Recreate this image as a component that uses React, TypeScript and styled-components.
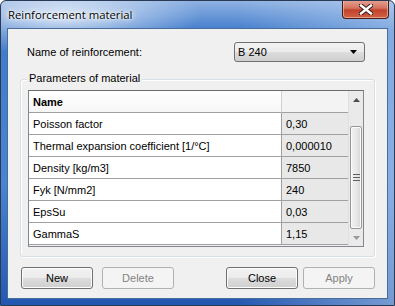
import styled, { createGlobalStyle } from "styled-components";

const rows = [
  { name: "Poisson factor", value: "0,30" },
  { name: "Thermal expansion coefficient [1/°C]", value: "0,000010" },
  { name: "Density [kg/m3]", value: "7850" },
  { name: "Fyk [N/mm2]", value: "240" },
  { name: "EpsSu", value: "0,03" },
  { name: "GammaS", value: "1,15" },
];

const Global = createGlobalStyle`
  html, body { margin: 0; padding: 0; background: #fff; }
  body { font-family: "Liberation Sans", Arial, sans-serif; font-size: 11px; color: #000; }
`;

const App = () => (
  <>
    <Global />
    <Window>
      <TitleBar>
        <Title>Reinforcement material</Title>
        <CloseBtn>
          <svg width="14" height="11" viewBox="0 0 14 11">
            <path
              d="M2 1.5 L12 9.5 M12 1.5 L2 9.5"
              stroke="#3a1a1a"
              strokeWidth="4.4"
              strokeLinecap="square"
            />
            <path
              d="M2 1.5 L12 9.5 M12 1.5 L2 9.5"
              stroke="#fff"
              strokeWidth="2.4"
              strokeLinecap="square"
            />
          </svg>
        </CloseBtn>
      </TitleBar>
      <Client>
        <NameRow>
          <Label>Name of reinforcement:</Label>
          <Combo>
            <span>B 240</span>
            <svg width="7" height="4" viewBox="0 0 7 4">
              <path d="M0 0 H7 L3.5 4 Z" fill="#000" />
            </svg>
          </Combo>
        </NameRow>
        <Group>
          <Legend>Parameters of material</Legend>
          <Grid>
            <Table>
              <HeaderRow>
                <HeadCell>Name</HeadCell>
                <HeadCell $value />
              </HeaderRow>
              {rows.map((r) => (
                <Row key={r.name}>
                  <Cell>{r.name}</Cell>
                  <Cell $value>{r.value}</Cell>
                </Row>
              ))}
            </Table>
            <ScrollBar>
              <Arrow>
                <svg width="7" height="4" viewBox="0 0 7 4">
                  <path d="M0 4 H7 L3.5 0 Z" fill="#4d4d4d" />
                </svg>
              </Arrow>
              <Track>
                <Thumb>
                  <Grip />
                </Thumb>
              </Track>
              <Arrow>
                <svg width="7" height="4" viewBox="0 0 7 4">
                  <path d="M0 0 H7 L3.5 4 Z" fill="#9a9a9a" />
                </svg>
              </Arrow>
            </ScrollBar>
          </Grid>
        </Group>
        <Buttons>
          <Pair $gap={9}>
            <Button>New</Button>
            <Button disabled>Delete</Button>
          </Pair>
          <Pair $gap={5}>
            <Button>Close</Button>
            <Button disabled>Apply</Button>
          </Pair>
        </Buttons>
      </Client>
    </Window>
  </>
);

const Window = styled.div`
  width: 395px;
  height: 306px;
  box-sizing: border-box;
  border: 1px solid #2a3a55;
  border-radius: 6px 6px 0 0;
  background:
    radial-gradient(ellipse 140px 40px at 60px 14px, rgba(235, 242, 250, 0.85), rgba(235, 242, 250, 0) 100%),
    linear-gradient(90deg, rgba(255, 255, 255, 0) 0%, rgba(255, 255, 255, 0) 60%,
      rgba(200, 220, 245, 0.5) 100%),
    linear-gradient(180deg, #8fb2e2 0%, #3f7bcc 10%, #4a84d0 60%, #2358b0 100%);
  display: flex;
  flex-direction: column;
  overflow: hidden;
`;

const TitleBar = styled.div`
  height: 27px;
  display: flex;
  align-items: flex-start;
  justify-content: space-between;
  padding-left: 7px;
  padding-right: 5px;
`;

const Title = styled.div`
  font-family: "Open Sans", "Liberation Sans", sans-serif;
  font-size: 11.3px;
  color: #000;
  margin-top: 6px;
  text-shadow: 0 0 8px #fff, 0 0 4px #fff, 0 0 2px #fff;
`;

const CloseBtn = styled.div`
  width: 47px;
  height: 19px;
  margin-top: -1px;
  box-sizing: border-box;
  border: 1px solid #4a1a16;
  border-top: none;
  border-radius: 0 0 4px 4px;
  background: linear-gradient(180deg, #e3a595 0%, #d5735f 45%, #c2422b 55%, #cf6244 100%);
  box-shadow: inset 0 0 0 1px rgba(255, 210, 190, 0.55);
  display: flex;
  align-items: center;
  justify-content: center;
`;

const Client = styled.div`
  flex: 1;
  margin: 0 6px 6px 6px;
  background: #f0f0f0;
  border: 1px solid #4a6c98;
  padding: 13px 12px 0 12px;
  display: flex;
  flex-direction: column;
`;

const NameRow = styled.div`
  display: flex;
  align-items: center;
  justify-content: space-between;
  padding: 0 10px 0 7px;
  height: 20px;
`;

const Label = styled.div`
  font-size: 11px;
`;

const Combo = styled.div`
  width: 131px;
  height: 20px;
  box-sizing: border-box;
  border: 1px solid #707070;
  border-radius: 3px;
  background: linear-gradient(180deg, #f2f2f2 0%, #ebebeb 49%, #dddddd 50%, #cfcfcf 100%);
  display: flex;
  align-items: center;
  justify-content: space-between;
  padding: 0 7px 0 3px;
`;

const Group = styled.div`
  position: relative;
  margin-top: 17px;
  height: 178px;
  box-sizing: border-box;
  border: 1px solid #d5dfe5;
  border-radius: 3px;
  box-shadow: inset 1px 1px 0 #fff, 1px 1px 0 #fff;
  padding: 10px 10px 0 7px;
`;

const Legend = styled.div`
  position: absolute;
  top: -8px;
  left: 6px;
  padding: 0 2px;
  background: #f0f0f0;
  font-size: 11px;
`;

const Grid = styled.div`
  display: flex;
  height: 157px;
  box-sizing: border-box;
  border: 1px solid #828790;
  border-top-color: #6d6d6d;
  background: #f0f0f0;
`;

const Table = styled.div`
  display: grid;
  grid-template-columns: 253px 66px;
  grid-auto-rows: 22px;
  align-content: start;
`;

const HeaderRow = styled.div`
  display: contents;
`;

const HeadCell = styled.div<{ $value?: boolean }>`
  background: linear-gradient(180deg, #ffffff 0%, #f6f6f6 100%);
  border-bottom: 1px solid #a0a0a0;
  border-right: 1px solid #d0d0d0;
  font-weight: bold;
  display: flex;
  align-items: center;
  padding-left: 4px;
  ${(p) => p.$value && "background: #f3f3f3; border-right: none;"}
`;

const Row = styled.div`
  display: contents;
`;

const Cell = styled.div<{ $value?: boolean }>`
  background: ${(p) => (p.$value ? "#e8e8e8" : "#fff")};
  border-bottom: 1px solid #a0a0a0;
  border-right: ${(p) => (p.$value ? "none" : "1px solid #a0a0a0")};
  display: flex;
  align-items: center;
  padding-left: 4px;
  white-space: nowrap;
  overflow: hidden;
`;

const ScrollBar = styled.div`
  width: 17px;
  display: flex;
  flex-direction: column;
  background: #eaeaea;
  border-left: 1px solid #e0e0e0;
`;

const Arrow = styled.div`
  height: 17px;
  display: flex;
  align-items: center;
  justify-content: center;
`;

const Track = styled.div`
  flex: 1;
  padding: 0 1px;
  display: flex;
  flex-direction: column;
`;

const Thumb = styled.div`
  margin-top: 18px;
  height: 103px;
  box-sizing: border-box;
  border: 1px solid #979797;
  border-radius: 2px;
  background: linear-gradient(90deg, #f3f3f3 0%, #e8e8e8 50%, #d6d6d6 100%);
  box-shadow: inset 0 0 0 1px #fbfbfb;
  display: flex;
  align-items: center;
  justify-content: center;
`;

const Grip = styled.div`
  width: 7px;
  height: 7px;
  background: repeating-linear-gradient(180deg, #606060 0 1px, transparent 1px 3px);
`;

const Buttons = styled.div`
  display: flex;
  justify-content: space-between;
  margin-top: 10px;
  padding: 0 0 0 1px;
`;

const Pair = styled.div<{ $gap: number }>`
  display: flex;
  gap: ${(p) => p.$gap}px;
`;

const Button = styled.button`
  width: 72px;
  height: 22px;
  box-sizing: border-box;
  border: 1px solid #707070;
  border-radius: 3px;
  background: linear-gradient(180deg, #f2f2f2 0%, #ebebeb 49%, #dddddd 50%, #cfcfcf 100%);
  box-shadow: inset 0 0 0 1px #fcfcfc;
  font-family: "Liberation Sans", Arial, sans-serif;
  font-size: 11px;
  color: #000;
  padding: 0;
  &:disabled {
    background: #f4f4f4;
    border-color: #adb2b5;
    color: #838383;
    box-shadow: none;
  }
`;

export default App;
